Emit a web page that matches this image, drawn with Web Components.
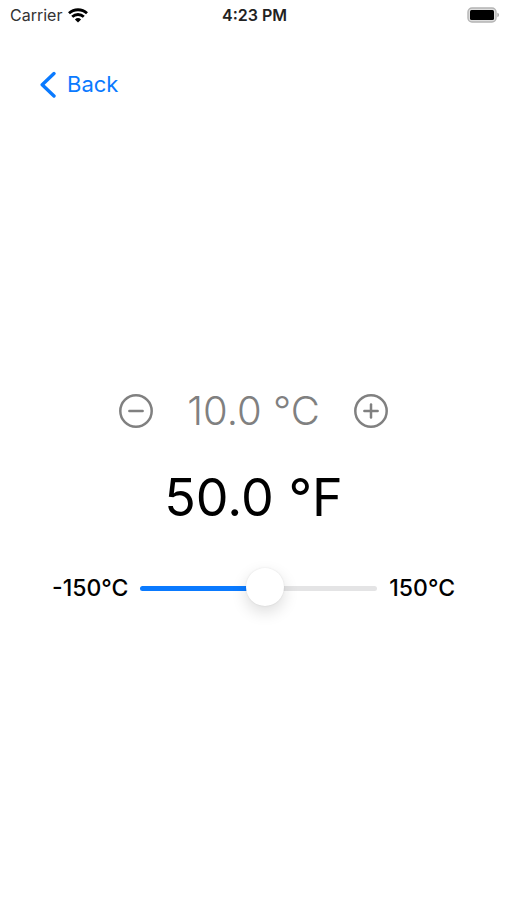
<!DOCTYPE html>
<html lang="en">
<head>
  <meta charset="UTF-8">
  <meta name="viewport" content="width=device-width, initial-scale=1">
  <title>Temperature</title>
  <style>
    body {
      margin: 0;
      background: #fff;
      color: #000;
      font-family: Inter, "Liberation Sans", sans-serif;
    }
  </style>
</head>
<body>
  <temperature-screen></temperature-screen>

  <script>
    class StatusBar extends HTMLElement {
      constructor() {
        super();
        this.attachShadow({ mode: 'open' });
      }

      connectedCallback() {
        this.shadowRoot.innerHTML = `
          <style>
            :host {
              display: grid;
              grid-template-columns: 1fr auto 1fr;
              align-items: center;
              height: 30px;
              padding: 0 8px 0 10px;
              font-size: 16px;
              line-height: 20px;
            }
            .carrier {
              display: flex;
              align-items: center;
              gap: 6px;
              color: #333;
            }
            .time {
              font-weight: 600;
              color: #222;
            }
            .battery {
              justify-self: end;
            }
            svg {
              display: block;
            }
          </style>
          <div class="carrier">
            <slot name="carrier"></slot>
            <svg width="20" height="15" viewBox="0 0 20 15" fill="none" stroke="#000" stroke-width="2.8" aria-hidden="true">
              <path d="M1 5.2C6 .6 14 .6 19 5.2"/>
              <path d="M4.2 8.8C7.5 5.7 12.5 5.7 15.8 8.8"/>
              <path d="M10 14.4L6.9 11.4Q10 8.8 13.1 11.4Z" fill="#000" stroke="none"/>
            </svg>
          </div>
          <div class="time"><slot name="time"></slot></div>
          <svg class="battery" width="32" height="16" viewBox="0 0 32 16" aria-hidden="true">
            <rect x="1" y="1" width="28" height="14" rx="4" fill="#dedede" stroke="#b4b4b4" stroke-width="1.4"/>
            <rect x="3" y="3" width="24" height="10" rx="1.5" fill="#000"/>
            <path d="M30.4 5.8Q32 6.4 32 8T30.4 10.2Z" fill="#a6a6a6"/>
          </svg>
        `;
      }
    }

    class BackLink extends HTMLElement {
      constructor() {
        super();
        this.attachShadow({ mode: 'open' });
      }

      connectedCallback() {
        this.shadowRoot.innerHTML = `
          <style>
            :host {
              display: block;
              padding: 40px 40px 0;
            }
            a {
              display: inline-flex;
              align-items: center;
              gap: 11px;
              color: #0a7aff;
              font-size: 22px;
              line-height: 28px;
              text-decoration: none;
            }
          </style>
          <a href="#">
            <svg width="16" height="28" viewBox="0 0 16 28" fill="none" stroke="currentColor" stroke-width="3.4" stroke-linecap="round" stroke-linejoin="round" aria-hidden="true">
              <path d="M14 3.6L2.2 14.8L14 26"/>
            </svg>
            <slot></slot>
          </a>
        `;
      }
    }

    class StepButton extends HTMLElement {
      constructor() {
        super();
        this.attachShadow({ mode: 'open' });
      }

      connectedCallback() {
        const plus = this.getAttribute('kind') === 'plus';
        this.shadowRoot.innerHTML = `
          <style>
            :host {
              display: block;
            }
            button {
              display: block;
              padding: 0;
              border: 0;
              background: none;
              color: #808080;
              cursor: pointer;
            }
            svg {
              display: block;
            }
          </style>
          <button type="button" aria-label="${plus ? 'Increase' : 'Decrease'}">
            <svg width="34" height="34" viewBox="0 0 34 34" fill="none" stroke="currentColor" stroke-width="2.5" stroke-linecap="round">
              <circle cx="17" cy="17" r="15.7"/>
              <path d="M10.4 17H23.6"/>
              ${plus ? '<path d="M17 10.4V23.6"/>' : ''}
            </svg>
          </button>
        `;
      }
    }

    class RangeSlider extends HTMLElement {
      constructor() {
        super();
        this.attachShadow({ mode: 'open' });
      }

      connectedCallback() {
        const min = this.getAttribute('min');
        const max = this.getAttribute('max');
        this.shadowRoot.innerHTML = `
          <style>
            :host {
              display: flex;
              align-items: center;
              gap: 12px;
              font-size: 23px;
              font-weight: 500;
              line-height: 38px;
              white-space: nowrap;
            }
            input {
              flex: 1;
              min-width: 0;
              height: 38px;
              margin: 0;
              background: none;
              appearance: none;
              -webkit-appearance: none;
            }
            input::-webkit-slider-runnable-track {
              height: 5px;
              border-radius: 3px;
              background: linear-gradient(to right, #0a7aff var(--fill), #e4e4e5 var(--fill));
            }
            input::-webkit-slider-thumb {
              -webkit-appearance: none;
              width: 38px;
              height: 38px;
              margin-top: -18px;
              border-radius: 50%;
              background: #fff;
              box-shadow: 0 0 2px rgba(0, 0, 0, 0.1), 0 6px 16px rgba(0, 0, 0, 0.14);
            }
          </style>
          <span>${min}°C</span>
          <input type="range" min="${min}" max="${max}" value="${this.getAttribute('value')}" aria-label="Temperature in Celsius">
          <span>${max}°C</span>
        `;
        this.input = this.shadowRoot.querySelector('input');
        this.input.addEventListener('input', () => {
          this.paint();
          this.dispatchEvent(new CustomEvent('change-value', { detail: Number(this.input.value) }));
        });
        this.paint();
      }

      set value(v) {
        this.input.value = v;
        this.paint();
      }

      paint = () => {
        const { min, max, value } = this.input;
        this.input.style.setProperty('--fill', `${(value - min) / (max - min) * 100}%`);
      }
    }

    class TemperatureScreen extends HTMLElement {
      constructor() {
        super();
        this.attachShadow({ mode: 'open' });
        this.celsius = 10;
      }

      connectedCallback() {
        this.shadowRoot.innerHTML = `
          <style>
            :host {
              display: flex;
              flex-direction: column;
              min-height: 100vh;
            }
            main {
              flex: 1;
              display: flex;
              flex-direction: column;
              justify-content: center;
              padding-bottom: 8px;
            }
            .stepper {
              display: flex;
              align-items: center;
              justify-content: center;
              gap: 34px;
            }
            .celsius {
              color: #808080;
              font-size: 40px;
              font-weight: 300;
              line-height: 48px;
            }
            .fahrenheit {
              margin: 32px 0 40px;
              font-size: 52px;
              line-height: 62px;
              text-align: center;
            }
            range-slider {
              margin: 0 52px;
            }
          </style>
          <status-bar>
            <span slot="carrier">Carrier</span>
            <span slot="time">4:23 PM</span>
          </status-bar>
          <back-link>Back</back-link>
          <main>
            <div class="stepper">
              <step-button kind="minus"></step-button>
              <span class="celsius"></span>
              <step-button kind="plus"></step-button>
            </div>
            <div class="fahrenheit"></div>
            <range-slider min="-150" max="150" value="${this.celsius}"></range-slider>
          </main>
        `;
        const $ = (s) => this.shadowRoot.querySelector(s);
        $('[kind="minus"]').addEventListener('click', () => this.update(this.celsius - 1));
        $('[kind="plus"]').addEventListener('click', () => this.update(this.celsius + 1));
        $('range-slider').addEventListener('change-value', (e) => this.update(e.detail));
        this.update(this.celsius);
      }

      update = (value) => {
        this.celsius = Math.min(150, Math.max(-150, value));
        const root = this.shadowRoot;
        root.querySelector('.celsius').textContent = `${this.celsius.toFixed(1)} °C`;
        root.querySelector('.fahrenheit').textContent = `${(this.celsius * 9 / 5 + 32).toFixed(1)} °F`;
        root.querySelector('range-slider').value = this.celsius;
      }
    }

    customElements.define('status-bar', StatusBar);
    customElements.define('back-link', BackLink);
    customElements.define('step-button', StepButton);
    customElements.define('range-slider', RangeSlider);
    customElements.define('temperature-screen', TemperatureScreen);
  </script>
</body>
</html>
